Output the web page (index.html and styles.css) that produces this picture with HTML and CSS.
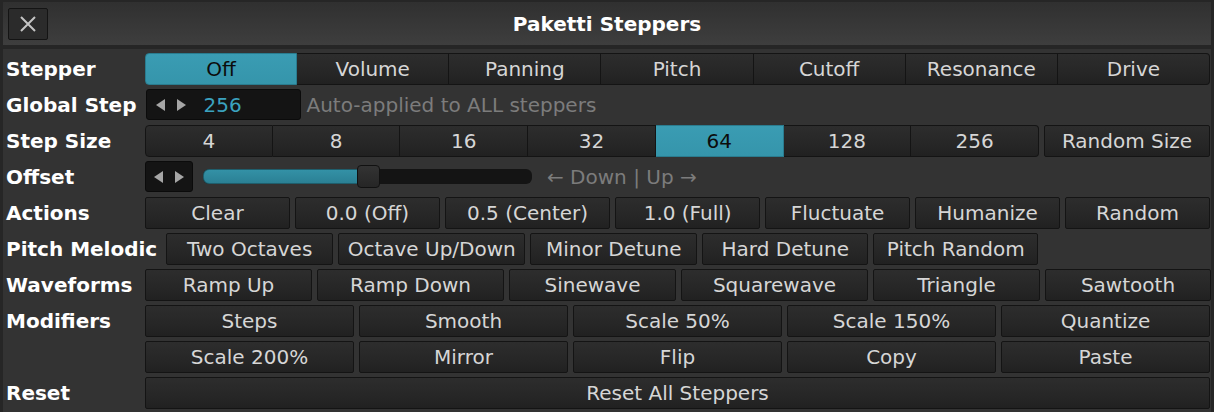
FILE: index.html
```html
<!DOCTYPE html>
<html lang="en">
<head>
  <meta charset="UTF-8">
  <title>Paketti Steppers</title>
  <link rel="stylesheet" href="styles.css">
</head>
<body>
<div id="win">
  <div class="titlebar">
    <div class="title-left">
      <button class="close">
        <svg width="16" height="16" viewBox="0 0 16 16"><path d="M1 1L15 15M15 1L1 15" stroke="#c4c4c4" stroke-width="2" fill="none"/></svg>
      </button>
    </div>
    <div class="title">Paketti Steppers</div>
    <div></div>
  </div>

  <div id="content">
    <div class="row">
      <span class="label">Stepper</span>
      <div class="seg seg-stepper">
        <button class="on">Off</button>
        <button>Volume</button>
        <button>Panning</button>
        <button>Pitch</button>
        <button>Cutoff</button>
        <button>Resonance</button>
        <button>Drive</button>
      </div>
    </div>

    <div class="row">
      <span class="label">Global Step</span>
      <div class="valuebox">
        <span class="arrows"><i class="tri-l"></i><i class="tri-r"></i></span>
        <span class="value">256</span>
      </div>
      <span class="hint hint-global">Auto-applied to ALL steppers</span>
    </div>

    <div class="row">
      <span class="label">Step Size</span>
      <div class="seg seg-size">
        <button>4</button>
        <button>8</button>
        <button>16</button>
        <button>32</button>
        <button class="on">64</button>
        <button>128</button>
        <button>256</button>
      </div>
      <button class="btn btn-random">Random Size</button>
    </div>

    <div class="row">
      <span class="label">Offset</span>
      <div class="valuebox arrowbox">
        <span class="arrows"><i class="tri-l"></i><i class="tri-r"></i></span>
      </div>
      <div class="slider">
        <div class="slider-fill"></div>
        <div class="slider-knob"></div>
      </div>
      <span class="hint hint-offset">← Down | Up →</span>
    </div>

    <div class="row">
      <span class="label">Actions</span>
      <div class="group g-actions">
        <button class="btn">Clear</button>
        <button class="btn">0.0 (Off)</button>
        <button class="btn">0.5 (Center)</button>
        <button class="btn">1.0 (Full)</button>
        <button class="btn">Fluctuate</button>
        <button class="btn">Humanize</button>
        <button class="btn">Random</button>
      </div>
    </div>

    <div class="row">
      <span class="label">Pitch Melodic</span>
      <div class="group g-pitch">
        <button class="btn">Two Octaves</button>
        <button class="btn">Octave Up/Down</button>
        <button class="btn">Minor Detune</button>
        <button class="btn">Hard Detune</button>
        <button class="btn">Pitch Random</button>
      </div>
    </div>

    <div class="row">
      <span class="label">Waveforms</span>
      <div class="group g-wave">
        <button class="btn">Ramp Up</button>
        <button class="btn">Ramp Down</button>
        <button class="btn">Sinewave</button>
        <button class="btn">Squarewave</button>
        <button class="btn">Triangle</button>
        <button class="btn">Sawtooth</button>
      </div>
    </div>

    <div class="row">
      <span class="label">Modifiers</span>
      <div class="group g-mod">
        <button class="btn">Steps</button>
        <button class="btn">Smooth</button>
        <button class="btn">Scale 50%</button>
        <button class="btn">Scale 150%</button>
        <button class="btn">Quantize</button>
      </div>
    </div>

    <div class="row">
      <span class="label"></span>
      <div class="group g-mod">
        <button class="btn">Scale 200%</button>
        <button class="btn">Mirror</button>
        <button class="btn">Flip</button>
        <button class="btn">Copy</button>
        <button class="btn">Paste</button>
      </div>
    </div>

    <div class="row">
      <span class="label">Reset</span>
      <button class="btn btn-full">Reset All Steppers</button>
    </div>
  </div>
</div>
</body>
</html>
```

FILE: styles.css
```css
html, body {
  margin: 0;
  padding: 0;
  background: #262626;
}

#win {
  width: 1214px;
  height: 412px;
  box-sizing: border-box;
  padding: 2px 3px 0 3px;
  background: #262626;
  font-family: "DejaVu Sans", sans-serif;
  font-size: 20px;
  overflow: hidden;
}

.titlebar {
  height: 43px;
  display: grid;
  grid-template-columns: 1fr auto 1fr;
  align-items: center;
  background: linear-gradient(#303030, #3e3e3e);
  margin-bottom: 4px;
}

.title-left {
  padding-left: 5px;
}

.close {
  width: 40px;
  height: 32px;
  box-sizing: border-box;
  border: 1px solid #141414;
  border-radius: 2px;
  background: #2b2b2b;
  display: flex;
  align-items: center;
  justify-content: center;
  padding: 0;
}

.title {
  color: #fff;
  font-weight: bold;
}

#content {
  background: #333333;
  height: 363px;
  box-sizing: border-box;
  padding: 4px 1px 0 3px;
  display: flex;
  flex-direction: column;
  gap: 5px;
}

.row {
  display: flex;
  align-items: center;
  height: 31px;
}

.label {
  flex: 0 0 auto;
  min-width: 130px;
  margin-right: 9px;
  color: #fff;
  font-weight: bold;
  white-space: nowrap;
}

button {
  font-family: inherit;
  font-size: 20px;
  color: #d6d6d6;
  cursor: default;
}

.btn, .seg button {
  height: 32px;
  box-sizing: border-box;
  border: 1px solid #141414;
  background: linear-gradient(#2d2d2d, #272727 55%, #212121);
  padding: 0;
  white-space: nowrap;
}

.btn {
  border-radius: 2px;
}

/* segmented switches */
.seg {
  display: grid;
  grid-template-columns: repeat(7, 1fr);
  height: 32px;
}

.seg button {
  border-radius: 0;
  border-left-width: 0;
}

.seg button:first-child {
  border-left-width: 1px;
  border-radius: 4px 0 0 4px;
}

.seg button:last-child {
  border-radius: 0 4px 4px 0;
}

.seg button.on {
  background: linear-gradient(#3a9cb3, #3595ab);
  color: #0c0c0c;
  border-color: #2a7c8f;
}

.seg-stepper {
  width: 1065px;
}

.seg-size {
  width: 894px;
}

.btn-random {
  width: 166px;
  margin-left: 5px;
}

/* value boxes */
.valuebox {
  width: 155px;
  height: 31px;
  box-sizing: border-box;
  background: #141414;
  border: 1px solid #0b0b0b;
  border-radius: 3px;
  display: flex;
  align-items: center;
  padding-left: 9px;
}

.arrowbox {
  width: 48px;
  padding-left: 8px;
}

.arrows {
  display: flex;
  gap: 12px;
  align-items: center;
}

.tri-l, .tri-r {
  display: block;
  width: 0;
  height: 0;
  border-top: 6px solid transparent;
  border-bottom: 6px solid transparent;
}

.tri-l {
  border-right: 9px solid #a6a6a6;
}

.tri-r {
  border-left: 9px solid #a6a6a6;
}

.value {
  margin-left: 18px;
  color: #3ba2bf;
}

.hint {
  color: #7c7c7c;
  white-space: nowrap;
}

.hint-global {
  margin-left: 6px;
}

/* slider */
.slider {
  position: relative;
  width: 329px;
  height: 15px;
  margin-left: 10px;
  background: #141414;
  border-radius: 6px;
}

.slider-fill {
  width: 160px;
  height: 15px;
  box-sizing: border-box;
  border: 1px solid #1f5e6c;
  border-radius: 6px 0 0 6px;
  background: linear-gradient(#3391a6, #2b8094);
}

.slider-knob {
  position: absolute;
  left: 154px;
  top: -4px;
  width: 23px;
  height: 23px;
  box-sizing: border-box;
  border: 1px solid #111;
  border-radius: 4px;
  background: linear-gradient(#333, #262626);
}

.hint-offset {
  margin-left: 15px;
}

/* button groups */
.group {
  display: grid;
  gap: 5px;
}

.g-actions {
  width: 1065px;
  grid-template-columns: 1fr 1fr 1.14fr 1fr 1fr 1fr 1fr;
}

.g-pitch {
  grid-template-columns: 167px 187px 167px 166px 165px;
}

.g-wave {
  grid-template-columns: 167px 187px 167px 187px 167px 166px;
}

.g-mod {
  width: 1065px;
  grid-template-columns: repeat(5, 1fr);
}

.btn-full {
  width: 1065px;
}
```
